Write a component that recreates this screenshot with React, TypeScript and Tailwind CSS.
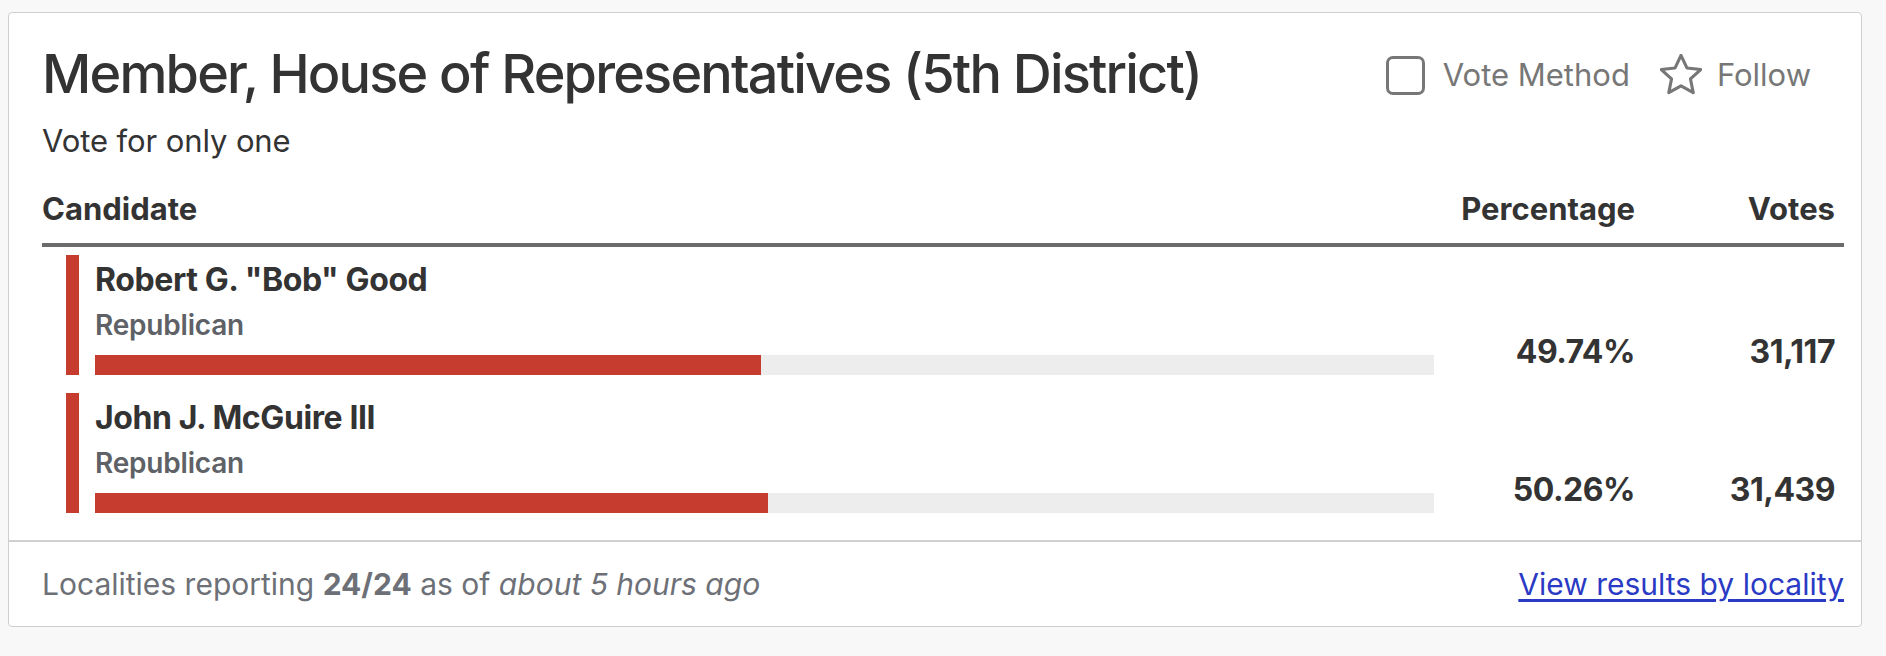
import React from "react";

type Candidate = { name: string; party: string; pct: number; votes: string };

const candidates: Candidate[] = [
  { name: 'Robert G. "Bob" Good', party: "Republican", pct: 49.74, votes: "31,117" },
  { name: "John J. McGuire III", party: "Republican", pct: 50.26, votes: "31,439" },
];

function StarIcon() {
  return (
    <svg width="42" height="42" viewBox="2.2 2.2 19.6 19.6" fill="none" stroke="#777" strokeWidth="1.45" strokeLinejoin="round">
      <path d="M12 2.8l2.75 5.9 6.45.75-4.78 4.4 1.28 6.37L12 17.05l-5.7 3.17 1.28-6.37L2.8 9.45l6.45-.75z" />
    </svg>
  );
}

export default function App() {
  return (
    <div className="min-h-screen bg-[#f8f8f8] pt-[12px] font-['Inter',sans-serif]">
      <div className="ml-[8px] w-[1854px] rounded-[4px] border border-[#cfcfcf] bg-white">
        <div className="pl-[33px] pr-[17px]">
          <div className="flex items-start justify-between pt-[31px]">
            <div>
              <h1 className="text-[54px] font-medium leading-[60px] tracking-[-1.8px] text-[#333]">Member, House of Representatives (5th District)</h1>
              <p className="mt-[19px] text-[31px] leading-[36px] tracking-[-0.1px] text-[#333]">Vote for only one</p>
            </div>
            <div className="mr-[33px] mt-[10px] flex items-center text-[31px] leading-[40px] text-[#777]">
              <span className="h-[39px] w-[39px] rounded-[7px] border-[3px] border-[#777]" />
              <span className="ml-[18px]">Vote Method</span>
              <span className="ml-[30px] flex"><StarIcon /></span>
              <span className="ml-[15px]">Follow</span>
            </div>
          </div>

          <div className="mt-[32px] grid grid-cols-[1fr_200px_200px] border-b-[4px] border-[#6b6b6b] pb-[16px] text-[31px] font-bold leading-[36px] text-[#333]">
            <div>Candidate</div>
            <div className="pr-[9px] text-right">Percentage</div>
            <div className="pr-[9px] text-right">Votes</div>
          </div>

          <div className="flex flex-col gap-[18px] pt-[8px] pb-[27px]">
            {candidates.map((c) => (
              <div key={c.name} className="grid grid-cols-[1fr_200px_200px]">
                <div className="flex pl-[24px]">
                  <div className="w-[13px] bg-[#c63d2f]" />
                  <div className="flex-1 pl-[16px] pr-[10px]">
                    <div className="pt-[7px] text-[32px] font-bold leading-[36px] tracking-[-0.4px] text-[#333]">{c.name}</div>
                    <div className="mt-[11px] text-[28px] font-semibold leading-[32px] tracking-[-0.2px] text-[#5e6166]">{c.party}</div>
                    <div className="mt-[14px] h-[20px] bg-[#ededed]">
                      <div className="h-full bg-[#c63d2f]" style={{ width: `${c.pct}%` }} />
                    </div>
                  </div>
                </div>
                <div className="flex items-end justify-end pr-[9px] pb-[3px] text-[32px] font-bold leading-[40px] tracking-[-0.5px] text-[#333]">
                  {c.pct.toFixed(2)}%
                </div>
                <div className="flex items-end justify-end pr-[9px] pb-[3px] text-[32px] font-bold leading-[40px] tracking-[-0.5px] text-[#333]">
                  {c.votes}
                </div>
              </div>
            ))}
          </div>
        </div>

        <div className="flex items-center justify-between border-t-[2px] border-[#d0d0d0] pl-[33px] pr-[17px] pt-[24px] pb-[24px] text-[30px] leading-[36px]">
          <p className="text-[#6d7076]">
            Localities reporting <span className="font-bold">24/24</span> as of <em>about 5 hours ago</em>
          </p>
          <a href="#" className="text-[#2b3ac4] underline underline-offset-[4px]">View results by locality</a>
        </div>
      </div>
    </div>
  );
}
